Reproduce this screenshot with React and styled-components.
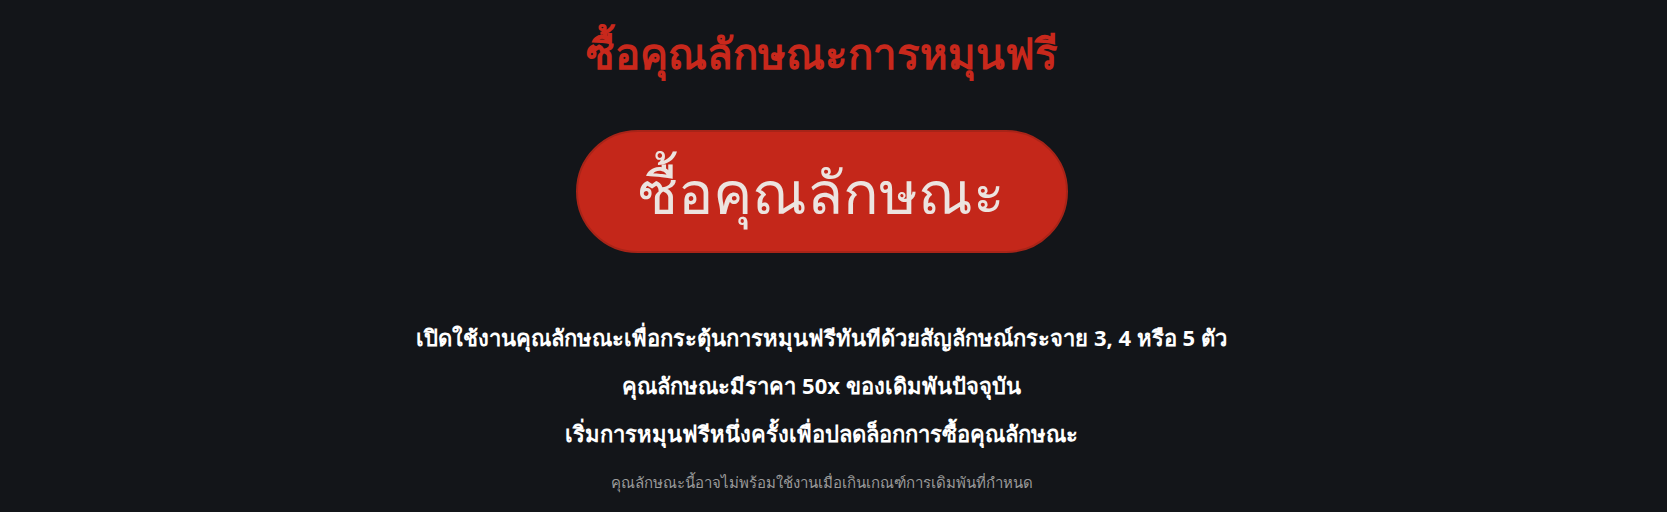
import styled, { createGlobalStyle } from 'styled-components';

const GlobalStyle = createGlobalStyle`
    html, body {
        margin: 0;
        padding: 0;
        background: #131519;
    }
    body {
        font-family: "Noto Sans", "Liberation Sans", sans-serif;
    }
`;

const Page = styled.main`
    min-height: 512px;
    box-sizing: border-box;
    padding: 27px 24px 0 0;
    display: flex;
    flex-direction: column;
    align-items: center;
    color: #ffffff;
`;

const Title = styled.h1`
    margin: 0;
    font-size: 42px;
    font-weight: 800;
    line-height: 52px;
    color: #c8281c;
`;

const BuyButton = styled.button`
    margin-top: 51px;
    width: 492px;
    height: 123px;
    border-radius: 62px;
    border: 2px solid #a82418;
    background: #c4271a;
    color: #ece4e0;
    font-family: inherit;
    font-size: 59px;
    font-weight: 400;
    line-height: 1;
    cursor: pointer;
`;

const Info = styled.section`
    margin-top: 69px;
    display: flex;
    flex-direction: column;
    align-items: center;
    gap: 18px;
`;

const Line = styled.p`
    margin: 0;
    font-size: 22px;
    font-weight: 700;
    line-height: 30px;
`;

const Note = styled.p`
    margin: 5px 0 0;
    font-size: 15px;
    line-height: 22px;
    color: #9a9a9a;
`;

const App = () => (
    <>
        <GlobalStyle />
        <Page>
            <Title>ซื้อคุณลักษณะการหมุนฟรี</Title>
            <BuyButton>ซื้อคุณลักษณะ</BuyButton>
            <Info>
                <Line>เปิดใช้งานคุณลักษณะเพื่อกระตุ้นการหมุนฟรีทันทีด้วยสัญลักษณ์กระจาย 3, 4 หรือ 5 ตัว</Line>
                <Line>คุณลักษณะมีราคา 50x ของเดิมพันปัจจุบัน</Line>
                <Line>เริ่มการหมุนฟรีหนึ่งครั้งเพื่อปลดล็อกการซื้อคุณลักษณะ</Line>
                <Note>คุณลักษณะนี้อาจไม่พร้อมใช้งานเมื่อเกินเกณฑ์การเดิมพันที่กำหนด</Note>
            </Info>
        </Page>
    </>
);

export default App;
